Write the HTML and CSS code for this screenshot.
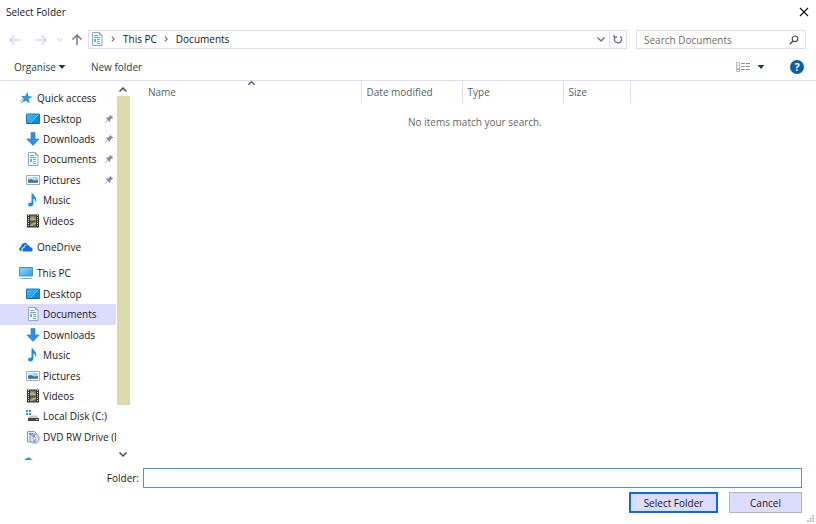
FILE: index.html
```html
<!DOCTYPE html>
<html lang="en-GB">
<head>
<meta charset="utf-8">
<title>Select Folder</title>
<link rel="stylesheet" href="styles.css">
</head>
<body>
<svg class="defs" aria-hidden="true">
  <defs>
    <linearGradient id="blue" x1="0" y1="0" x2="1" y2="1"><stop offset="0" stop-color="#38c0fa"/><stop offset="1" stop-color="#1688e0"/></linearGradient>
    <linearGradient id="screen" x1="0" y1="0" x2="1" y2="1"><stop offset="0" stop-color="#8ddcff"/><stop offset="1" stop-color="#2f9aea"/></linearGradient>
    <symbol id="star" viewBox="0 0 14 14"><path d="M8.500 1l.9 3.900 4.100.8-3.700 2 .5 4.800-3.300-2.800-4 2 1.700-3.800L2 4.800l4.200.1z" fill="#2798e6"/><path d="M1 9.500l3-1M1.500 12l3-2" stroke="#70baf0"/></symbol>
    <symbol id="desktop" viewBox="0 0 14 14"><path d="M.5 2h13v9.500H.5z" fill="url(#blue)" stroke="#1c78bd"/><path d="M5 11l7.500-8.500h.5V11z" fill="#1689e3"/><path d="M4.500 11L12 2.500" stroke="#5fd0ff"/><path d="M1 11.500h12" stroke="#1d5f98"/></symbol>
    <symbol id="download" viewBox="0 0 14 14"><path d="M5 .5h4V7h4.200L7 13.500.8 7H5z" fill="#2d91ea" stroke="#3475be" stroke-width=".6"/></symbol>
    <symbol id="document" viewBox="0 0 14 14"><path d="M2.500.5h7l2.500 2.500v10.500H2.500z" fill="#f5faff" stroke="#9aa7b4"/><path d="M9.500.5V3H12" fill="none" stroke="#9aa7b4"/><path d="M4 3.500h4M4 5.500h6M7 7.500h3M4 9.500h2M7 11.500h3" stroke="#52aeef"/><path d="M4 7h2v2H4zM7 9h3v1H7z" fill="#56b9f5"/></symbol>
    <symbol id="picture" viewBox="0 0 14 14"><path d="M.5 2.500h13v9H.5z" fill="#fff" stroke="#a2adb5"/><path d="M2 4h10v6H2z" fill="#a3d8f5"/><path d="M2 7l3-1 3 1.500 4-.5v3H2z" fill="#3b759b"/><path d="M3 5h4" stroke="#e9f8ff"/><path d="M2 9.500h10" stroke="#5592c4"/></symbol>
    <symbol id="music" viewBox="0 0 14 14"><path d="M5.500.5H7C7.500 3 10.800 3.500 10.300 8L9.300 9c.3-2-.5-3-1.900-3.600V11c0 1.500-1.500 2.500-3 2.500S2 12.600 2 11.500 3.200 9.300 5.500 9.500z" fill="#1591f2"/></symbol>
    <symbol id="video" viewBox="0 0 14 14"><path d="M1 .5h12v13H1z" fill="#35352f"/><path d="M4 1.500h6v5H4z" fill="#557fa9"/><path d="M4 7.500h6v5H4z" fill="#426fa8"/><path d="M4 4l3-1 3 2v1.500H4zM4 11l3-2 3-1v2l-4 2H4z" fill="#d5a33c"/><path d="M2.500 1v12M11.500 1v12" stroke="#ddd" stroke-dasharray="1 1"/></symbol>
    <symbol id="cloud" viewBox="0 0 14 14"><path d="M2.500 11.200C-.5 11-.5 7.500 2 7c0-3.500 4.500-5.500 7-2.500C6.500 4 5 5.500 4.600 7 2.500 7.500 2 9.500 2.500 11.200z" fill="#0871e5"/><path d="M5 11.500C2.600 11.500 2.800 8 5.300 8c.3-3.500 5-4 5.700-.8 3.500-.2 3.500 4.300.5 4.300z" fill="#0b6cf0"/></symbol>
    <symbol id="computer" viewBox="0 0 14 14"><path d="M.5 1.500h13v8.500H.5z" fill="url(#screen)" stroke="#4a93c6"/><path d="M1.500 12.500h11" stroke="#6ba9d6"/></symbol>
    <symbol id="disk" viewBox="0 0 14 14"><path d="M0 1h2v2H0zM3 1h2v2H3zM0 4h2v2H0zM3 4h2v2H3z" fill="#18a7e8"/><path d="M3.500 6.500h7.500l1.500 3H2z" fill="#c5cacd"/><path d="M2 9h11v3H2z" fill="#3f4549"/><path d="M10 10.500h2" stroke="#8de391"/></symbol>
    <symbol id="dvd" viewBox="0 0 14 14"><path d="M1.500 1.500h7l2 2V12h-9z" fill="#e5e9fb" stroke="#8b96bd"/><path d="M3 3h4v2H3z" fill="#699bda"/><circle cx="8.500" cy="8.500" r="4.700" fill="#d9dff2" stroke="#8792b5"/><path d="M8.500 8.500l-3-3 4-1z" fill="#9a87e3"/><path d="M8.500 8.500l2 4-4-.5z" fill="#73ba94"/><circle cx="8.500" cy="8.500" r="1.300" fill="#fff" stroke="#848eae" stroke-width=".6"/></symbol>
    <symbol id="pin" viewBox="0 0 10 10"><path d="M6 .8L9.300 4l-1.500.3-1.500 1.500-.2 2.400L4 6.200.8 9.200.6 9l3-3.300-1.900-2 2.600-.1 1.500-1.500z" fill="#8589a5"/></symbol>
    <symbol id="down" viewBox="0 0 10 10"><path d="M1.500 3.500L5 7l3.500-3.500" fill="none" stroke="currentColor" stroke-width="1.500"/></symbol>
    <symbol id="up" viewBox="0 0 10 10"><path d="M1.500 6.500L5 3l3.500 3.500" fill="none" stroke="currentColor" stroke-width="1.500"/></symbol>
    <symbol id="right" viewBox="0 0 10 10"><path d="M3.500 2L6.500 5l-3 3" fill="none" stroke="currentColor" stroke-width="1.500"/></symbol>
    <symbol id="arrow" viewBox="0 0 12 12"><path d="M1 6h10M5.500 1.500L1 6l4.500 4.500" fill="none" stroke="currentColor" stroke-width="1.500"/></symbol>
    <symbol id="caret" viewBox="0 0 8 8"><path d="M.5 2h7L4 6z" fill="currentColor"/></symbol>
  </defs>
</svg>

<header class="titlebar">
  <h1>Select Folder</h1>
  <button class="close" aria-label="Close"><svg viewBox="0 0 10 10"><path d="M1 1l8 8M9 1L1 9" stroke="currentColor" stroke-width="1.200"/></svg></button>
</header>

<div class="location">
  <div class="history">
    <button class="arrow" aria-label="Back" disabled><svg><use href="#arrow"/></svg></button>
    <button class="arrow forward" aria-label="Forward" disabled><svg><use href="#arrow"/></svg></button>
    <button class="recent" aria-label="Recent locations" disabled><svg><use href="#down"/></svg></button>
    <button class="arrow parent" aria-label="Up"><svg><use href="#arrow"/></svg></button>
  </div>
  <nav class="address" aria-label="Address">
    <svg class="icon"><use href="#document"/></svg>
    <svg class="separator"><use href="#right"/></svg>
    <a href="#">This PC</a>
    <svg class="separator"><use href="#right"/></svg>
    <a href="#">Documents</a>
    <button class="previous" aria-label="Previous locations"><svg class="chevron"><use href="#down"/></svg></button>
    <button class="refresh" aria-label="Refresh"><svg class="chevron" viewBox="0 0 10 10"><path d="M7 2.300A3.600 3.600 0 1 1 2.500 2.800M1.200.8v2.500h3" fill="none" stroke="currentColor" stroke-width="1.400"/></svg></button>
  </nav>
  <form class="search">
    <input type="text" aria-label="Search Documents" placeholder="Search Documents">
    <button aria-label="Search"><svg viewBox="0 0 10 10"><circle cx="6" cy="3.800" r="2.800" fill="none" stroke="currentColor" stroke-width="1.200"/><path d="M4 6L.8 9.200" stroke="currentColor" stroke-width="1.500"/></svg></button>
  </form>
</div>

<div class="toolbar">
  <button class="command">Organise <svg class="caret"><use href="#caret"/></svg></button>
  <button class="command">New folder</button>
  <button class="view" aria-label="Change your view"><svg class="icon" viewBox="0 0 14 14"><path d="M.5 2.500h3v9h-3z" fill="#fff" stroke="#bcbcb6"/><path d="M1 5.500h2M1 8.500h2" stroke="#c9c9c3"/><path d="M1 9.500h2" stroke="#e58585"/><path d="M5 3.500h9M5 6.500h9M5 9.500h9" stroke="#8f938a" stroke-dasharray="4 1"/></svg><svg class="caret"><use href="#caret"/></svg></button>
  <button class="help" aria-label="Help">?</button>
</div>

<main class="browser">
  <nav class="tree" aria-label="Folders">
    <ul class="quick">
      <li><a class="root" href="#"><svg class="icon"><use href="#star"/></svg>Quick access</a></li>
      <li><a href="#"><svg class="icon"><use href="#desktop"/></svg>Desktop<svg class="pin"><use href="#pin"/></svg></a></li>
      <li><a href="#"><svg class="icon"><use href="#download"/></svg>Downloads<svg class="pin"><use href="#pin"/></svg></a></li>
      <li><a href="#"><svg class="icon"><use href="#document"/></svg>Documents<svg class="pin"><use href="#pin"/></svg></a></li>
      <li><a href="#"><svg class="icon"><use href="#picture"/></svg>Pictures<svg class="pin"><use href="#pin"/></svg></a></li>
      <li><a href="#"><svg class="icon"><use href="#music"/></svg>Music</a></li>
      <li><a href="#"><svg class="icon"><use href="#video"/></svg>Videos</a></li>
    </ul>
    <ul class="cloud">
      <li><a class="root" href="#"><svg class="icon"><use href="#cloud"/></svg>OneDrive</a></li>
    </ul>
    <ul class="computer">
      <li><a class="root" href="#"><svg class="icon"><use href="#computer"/></svg>This PC</a></li>
      <li><a href="#"><svg class="icon"><use href="#desktop"/></svg>Desktop</a></li>
      <li><a class="selected" aria-current="true" href="#"><svg class="icon"><use href="#document"/></svg>Documents</a></li>
      <li><a href="#"><svg class="icon"><use href="#download"/></svg>Downloads</a></li>
      <li><a href="#"><svg class="icon"><use href="#music"/></svg>Music</a></li>
      <li><a href="#"><svg class="icon"><use href="#picture"/></svg>Pictures</a></li>
      <li><a href="#"><svg class="icon"><use href="#video"/></svg>Videos</a></li>
      <li><a href="#"><svg class="icon"><use href="#disk"/></svg>Local Disk (C:)</a></li>
      <li><a href="#"><svg class="icon"><use href="#dvd"/></svg>DVD RW Drive (D:)</a></li>
    </ul>
    <svg class="more" viewBox="0 0 14 3" aria-hidden="true"><path d="M3 2.500C5 0 8 0 9 2l2 1H3z" fill="#389cc8"/></svg>
  </nav>
  <div class="scrollbar">
    <button aria-label="Scroll up"><svg><use href="#up"/></svg></button>
    <div class="track"><div class="thumb"></div></div>
    <button aria-label="Scroll down"><svg><use href="#down"/></svg></button>
  </div>
  <div class="files">
    <table>
      <colgroup><col class="name"><col class="date"><col class="type"><col class="size"><col></colgroup>
      <thead><tr><th class="sorted" aria-sort="ascending">Name<svg><use href="#up"/></svg></th><th>Date modified</th><th>Type</th><th>Size</th><td></td></tr></thead>
      <tbody><tr><td class="empty" colspan="5">No items match your search.</td></tr></tbody>
    </table>
  </div>
</main>

<form class="selection">
  <div class="field"><label for="folder">Folder:</label><input id="folder" type="text"></div>
  <div class="actions">
    <button class="primary" type="button">Select Folder</button>
    <button class="cancel" type="button">Cancel</button>
  </div>
</form>
<svg class="grip" viewBox="0 0 8 8" aria-hidden="true"><path d="M0 6h2v2H0zM3 6h2v2H3zM6 6h2v2H6zM3 3h2v2H3zM6 3h2v2H6zM6 0h2v2H6z" fill="#b8b8b0"/></svg>
</body>
</html>
```
FILE: styles.css
```css
* { box-sizing: border-box; }

body {
  margin: 0;
  height: 100vh;
  display: flex;
  flex-direction: column;
  overflow: hidden;
  background: #fff;
  color: #17171c;
  font: 10px/16px "Open Sans", "Noto Sans", sans-serif;
}

button, input { font: inherit; color: inherit; }
button { display: flex; align-items: center; justify-content: center; padding: 0; border: 0; background: none; }
a { color: inherit; text-decoration: none; }
svg { display: block; flex: none; }
ul { list-style: none; margin: 0; padding: 0; }

.defs { position: absolute; width: 0; height: 0; }
.icon { width: 14px; height: 14px; }
.chevron { width: 10px; height: 10px; color: #74748e; }
.caret { width: 8px; height: 8px; }

.titlebar { display: flex; justify-content: space-between; align-items: center; height: 24px; padding: 0 7px 0 6px; }
.titlebar h1 { margin: 0; font-size: 10px; font-weight: 400; }
.close svg { width: 10px; height: 10px; }

.location { display: flex; align-items: stretch; height: 19px; margin: 6px 10px 0 0; }
.history { display: flex; align-items: center; width: 88px; padding-left: 9px; color: #d5d5fa; }
.history button { color: inherit; }
.arrow svg { width: 12px; height: 12px; }
.forward { margin-left: 14px; }
.forward svg { transform: rotate(180deg); }
.recent { margin-left: 9px; }
.recent svg { width: 7px; height: 7px; }
.history .parent { margin-left: 8px; color: #77778f; }
.parent svg { transform: rotate(90deg); }

.address { flex: 1; display: flex; align-items: center; border: 1px solid #dcdcff; padding: 0 0 1px 1px; }
.separator { width: 8px; height: 8px; margin: 0 6px 0 5px; color: #74748e; }
.previous { width: 16px; height: 100%; margin-left: auto; }
.refresh { width: 17px; height: 100%; border-left: 1px solid #dcdcff; }

.search { display: flex; width: 170px; margin-left: 9px; border: 1px solid #dcdcff; }
.search input { flex: 1; min-width: 0; padding: 0 0 0 7px; border: 0; outline: 0; background: none; }
.search input::placeholder { color: #6d6d68; opacity: 1; }
.search button { width: 22px; color: #4e4e48; }
.search svg { width: 10px; height: 10px; }

.toolbar { display: flex; align-items: center; gap: 25px; height: 32px; padding: 5px 12px 0 14px; border-bottom: 1px solid #dcdcff; color: #1d3e4c; }
.command { gap: 2px; }
.view { gap: 7px; margin-left: auto; }
.help { width: 14px; height: 14px; border-radius: 50%; background: #0860a8; color: #fff; font-size: 11px; font-weight: 700; }

.browser { flex: 1; min-height: 0; display: grid; grid-template-columns: 116px 14px 1fr; }

.tree { display: flex; flex-direction: column; gap: 6px; min-width: 0; padding-top: 7px; }
.tree ul { display: grid; grid-template-columns: minmax(0, 1fr); grid-auto-rows: 1fr; }
.quick { flex: 7 1 0; }
.cloud { flex: 1 1 0; }
.computer { flex: 9 1 0; }
.tree a { display: flex; align-items: center; height: 100%; padding: 0 2px 0 26px; gap: 3px; white-space: nowrap; overflow: hidden; }
.tree .root { padding-left: 19px; gap: 4px; }
.tree .selected { background: #dcdcff; }
.tree .pin { width: 10px; height: 10px; margin-left: auto; }
.more { width: 14px; height: 3px; margin: 4px 0 2px 22px; }

.scrollbar { display: flex; flex-direction: column; padding: 2px 0 2px; color: #4b4b3c; }
.scrollbar button { height: 13px; }
.scrollbar svg { width: 10px; height: 10px; }
.track { flex: 1; padding-left: 1px; }
.thumb { height: 88%; background: #dadaaa; }

.files { padding-left: 4px; }
.files table { width: 100%; table-layout: fixed; border-collapse: collapse; }
.name { width: 227px; }
.date, .type { width: 101px; }
.size { width: 67px; }
.files th { height: 22px; padding: 0 5px; border-right: 1px solid #dcdcff; color: #50636a; font-weight: 400; text-align: left; }
.files .sorted { position: relative; padding-left: 14px; }
.sorted svg { position: absolute; top: -2px; left: 50%; width: 9px; height: 9px; }
.files .empty { padding: 11px 0 0; color: #66665f; text-align: center; }

.selection { padding: 6px 14px 11px 0; }
.field { display: flex; align-items: center; }
.field label { width: 143px; padding-right: 4px; text-align: right; }
.field input { flex: 1; min-width: 0; height: 20px; padding: 0 4px; border: 1px solid #4a90f4; outline: 0; }
.actions { display: flex; justify-content: flex-end; gap: 11px; margin-top: 4px; }
.actions button { height: 21px; background: #dcdcff; }
.actions .primary { width: 89px; border: 2px solid #0868f8; }
.actions .cancel { width: 73px; border: 1px solid #b4b4b4; }

.grip { position: absolute; right: 2px; bottom: 2px; width: 7px; height: 7px; }
```
